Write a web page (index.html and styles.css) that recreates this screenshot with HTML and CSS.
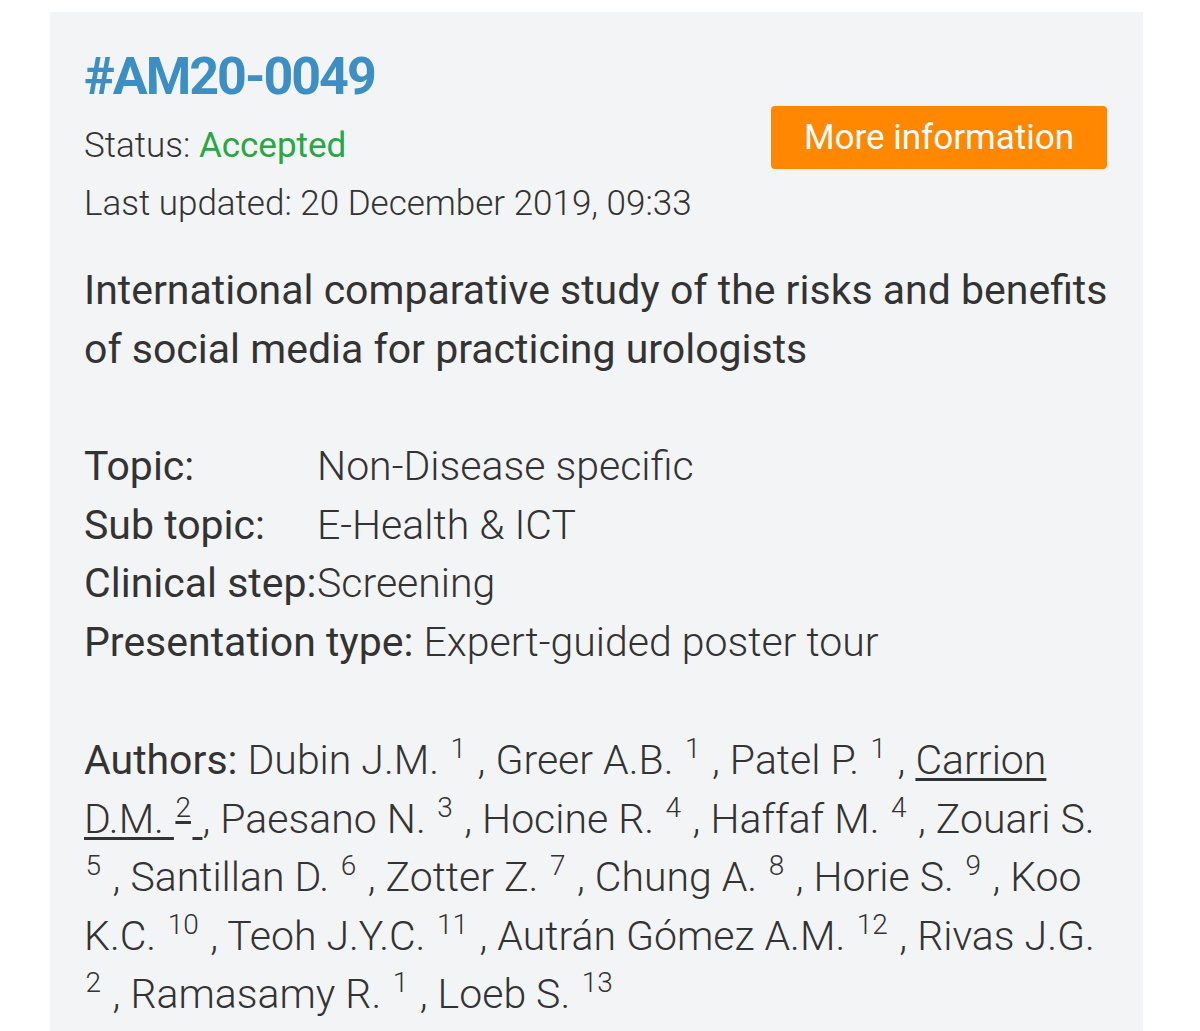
FILE: index.html
```html
<!DOCTYPE html>
<html lang="en">
<head>
<meta charset="utf-8">
<title>#AM20-0049</title>
<link rel="stylesheet" href="styles.css">
</head>
<body>
<div class="panel">
  <div class="header">
    <div class="meta">
      <h1 class="code">#AM20-0049</h1>
      <div class="meta-line">Status: <span class="accepted">Accepted</span></div>
      <div class="meta-line">Last updated: 20 December 2019, 09:33</div>
    </div>
    <a class="btn" href="#">More information</a>
  </div>
  <h2 class="abstract-title">International comparative study of the risks and benefits of social media for practicing urologists</h2>
  <div class="facts">
    <div class="fact"><span class="lbl">Topic:</span>Non-Disease specific</div>
    <div class="fact"><span class="lbl">Sub topic:</span>E-Health &amp; ICT</div>
    <div class="fact"><span class="lbl">Clinical step:</span>Screening</div>
    <div class="fact"><span class="lbl">Presentation type:</span> Expert-guided poster tour</div>
  </div>
  <div class="authors"><span class="lbl-inline">Authors:</span> Dubin J.M. <sup>1</sup> , Greer A.B. <sup>1</sup> , Patel P. <sup>1</sup> , <u>Carrion D.M. </u><sup><u>2</u></sup><u> </u>, Paesano N. <sup>3</sup> , Hocine R. <sup>4</sup> , Haffaf M. <sup>4</sup> , Zouari S. <sup>5</sup> , Santillan D. <sup>6</sup> , Zotter Z. <sup>7</sup> , Chung A. <sup>8</sup> , Horie S. <sup>9</sup> , Koo K.C. <sup>10</sup> , Teoh J.Y.C. <sup>11</sup> , Autrán Gómez A.M. <sup>12</sup> , Rivas J.G. <sup>2</sup> , Ramasamy R. <sup>1</sup> , Loeb S. <sup>13</sup></div>
  <div class="affil"><sup>1</sup> University of Miami, Dept. of Urology, Miami, United States of America</div>
</div>
</body>
</html>
```
FILE: styles.css
```css
html, body {
  margin: 0;
  padding: 0;
  background: #ffffff;
}
body {
  font-family: Roboto, "Liberation Sans", sans-serif;
  color: #333333;
}
.panel {
  margin: 12px 57px 0 50px;
  padding: 34px 34px 40px 34px;
  background: #f3f4f6;
}
.header {
  display: flex;
  justify-content: space-between;
  align-items: center;
}
.code {
  margin: 0 0 9px 0;
  font-size: 52px;
  line-height: 62px;
  font-weight: 700;
  letter-spacing: -2px;
  color: #3d8ec2;
}
.meta-line {
  font-size: 35px;
  line-height: 58px;
  font-weight: 300;
}
.accepted {
  color: #28a745;
  font-weight: 400;
}
.btn {
  display: block;
  margin: 0 2px 4px 0;
  background: #ff8800;
  color: #ffffff;
  text-decoration: none;
  font-size: 35px;
  line-height: 55px;
  padding: 4px 33px;
  border-radius: 4px;
  font-weight: 400;
}
.abstract-title {
  margin: 28px 0 0 0;
  font-size: 41px;
  line-height: 58.5px;
  font-weight: 400;
}
.facts {
  margin-top: 59px;
  font-size: 41px;
  line-height: 58.5px;
  font-weight: 300;
}
.lbl {
  display: inline-block;
  min-width: 233px;
  font-weight: 400;
}
.authors, .affil {
  font-size: 41px;
  line-height: 58.5px;
  font-weight: 300;
}
.authors {
  margin-top: 60px;
}
.lbl-inline {
  font-weight: 400;
}
sup {
  font-size: 28px;
  line-height: 0;
  vertical-align: 16px;
  margin: 0 1.5px;
}
u {
  text-decoration-thickness: 2.5px;
  text-underline-offset: 4px;
}
```
